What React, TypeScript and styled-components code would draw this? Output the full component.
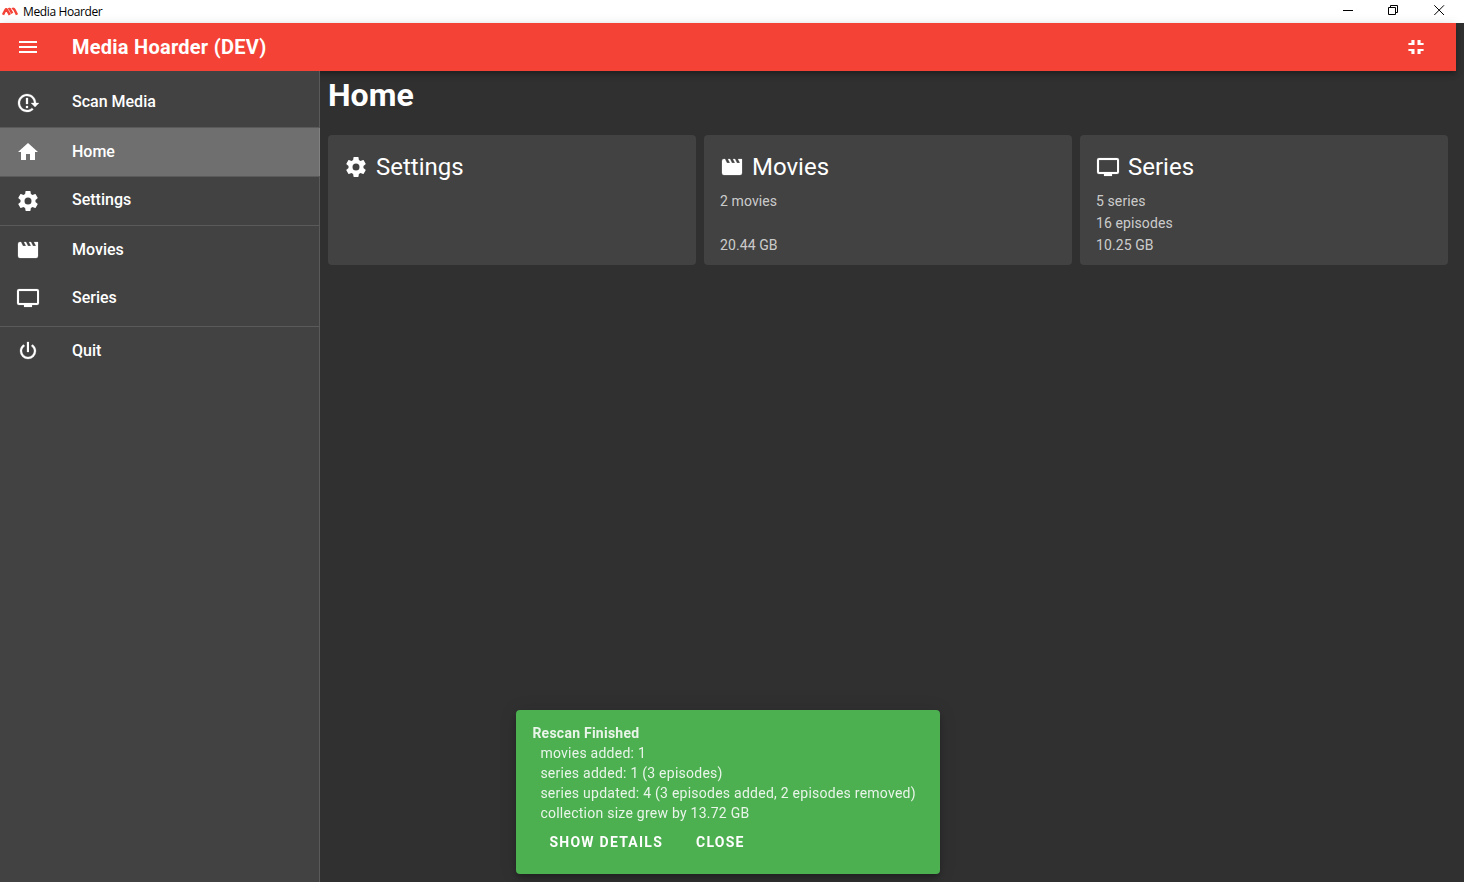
import React from "react";
import styled, { createGlobalStyle } from "styled-components";

const GlobalStyle = createGlobalStyle`
  * { box-sizing: border-box; }
  html, body { margin: 0; height: 100%; overflow: hidden; background: #303030; }
  body { font-family: Roboto, "Liberation Sans", sans-serif; color: #fff; }
`;

const paths = {
  menu: "M3,6H21V8H3V6M3,11H21V13H3V11M3,16H21V18H3V16Z",
  home: "M10,20V14H14V20H19V12H22L12,3L2,12H5V20H10Z",
  cog: "M12,15.5A3.5,3.5 0 0,1 8.5,12A3.5,3.5 0 0,1 12,8.5A3.5,3.5 0 0,1 15.5,12A3.5,3.5 0 0,1 12,15.5M19.43,12.97C19.47,12.65 19.5,12.33 19.5,12C19.5,11.67 19.47,11.34 19.43,11L21.54,9.37C21.73,9.22 21.78,8.95 21.66,8.73L19.66,5.27C19.54,5.05 19.27,4.96 19.05,5.05L16.56,6.05C16.04,5.66 15.5,5.32 14.87,5.07L14.5,2.42C14.46,2.18 14.25,2 14,2H10C9.75,2 9.54,2.18 9.5,2.42L9.13,5.07C8.5,5.32 7.96,5.66 7.44,6.05L4.95,5.05C4.73,4.96 4.46,5.05 4.34,5.27L2.34,8.73C2.21,8.95 2.27,9.22 2.46,9.37L4.57,11C4.53,11.34 4.5,11.67 4.5,12C4.5,12.33 4.53,12.65 4.57,12.97L2.46,14.63C2.27,14.78 2.21,15.05 2.34,15.27L4.34,18.73C4.46,18.95 4.73,19.03 4.95,18.95L7.44,17.94C7.96,18.34 8.5,18.68 9.13,18.93L9.5,21.58C9.54,21.82 9.75,22 10,22H14C14.25,22 14.46,21.82 14.5,21.58L14.87,18.93C15.5,18.67 16.04,18.34 16.56,17.94L19.05,18.95C19.27,19.03 19.54,18.95 19.66,18.73L21.66,15.27C21.78,15.05 21.73,14.78 21.54,14.63L19.43,12.97Z",
  movie: "M18,4L20,8H17L15,4H13L15,8H12L10,4H8L10,8H7L5,4H4A2,2 0 0,0 2,6V18A2,2 0 0,0 4,20H20A2,2 0 0,0 22,18V4H18Z",
  tv: "M21,17H3V5H21M21,3H3A2,2 0 0,0 1,5V17A2,2 0 0,0 3,19H8V21H16V19H21A2,2 0 0,0 23,17V5A2,2 0 0,0 21,3Z",
  power: "M16.56,5.44L15.11,6.89C16.84,7.94 18,9.83 18,12A6,6 0 0,1 12,18A6,6 0 0,1 6,12C6,9.83 7.16,7.94 8.88,6.88L7.44,5.44C5.36,6.88 4,9.28 4,12A8,8 0 0,0 12,20A8,8 0 0,0 20,12C20,9.28 18.64,6.88 16.56,5.44M13,3H11V13H13",
  rescan: "M2 12C2 16.97 6.03 21 11 21C13.39 21 15.68 20.06 17.4 18.4L15.9 16.9C14.63 18.25 12.86 19 11 19C4.76 19 1.64 11.46 6.05 7.05C10.46 2.64 18 5.77 18 12H15L19 16H19.1L23 12H20C20 7.03 15.97 3 11 3C6.03 3 2 7.03 2 12M10 15H12V17H10V15M10 7H12V13H10V7",
  exitFullscreen: "M13.5,14H19.6V16H16.6V19H13.5V14M4.4,14H10.5V19H7.4V16H4.4V14M7.4,5H10.5V10H4.4V8H7.4V5M19.6,8V10H13.5V5H16.6V8H19.6Z",
};
type IconName = keyof typeof paths;

const outline: Partial<Record<IconName, number>> = { power: 0.25, tv: 0.15, movie: 0.2, rescan: 0.25 };

const IconSvg = styled.svg<{ $outline: number }>`
  display: block;
  flex: none;
  width: 24px;
  height: 24px;
  fill: currentColor;
  stroke: ${(p) => (p.$outline ? "currentColor" : "none")};
  stroke-width: ${(p) => p.$outline}px;
`;
const Icon = ({ name }: { name: IconName }) => (
  <IconSvg viewBox="0 0 24 24" $outline={outline[name] ?? 0}><path d={paths[name]} /></IconSvg>
);

const Window = styled.div`
  display: flex;
  flex-direction: column;
  height: 100vh;
`;
const TitleBar = styled.header`
  display: flex;
  align-items: center;
  flex: none;
  height: 23px;
  padding-left: 2px;
  background: #fff;
  color: #000;
  font: 12px/23px "Open Sans", "Noto Sans", sans-serif;
  letter-spacing: -0.38px;
`;
const AppMark = styled.svg`
  width: 16px;
  height: 10px;
  margin-right: 5px;
`;
const WindowTitle = styled.span`
  flex: 1;
`;
const WindowButtons = styled.svg`
  width: 138px;
  height: 23px;
  fill: none;
  stroke: #000;
`;

const AppBar = styled.div`
  position: relative;
  z-index: 1;
  display: flex;
  align-items: center;
  flex: none;
  height: 48px;
  margin-right: 8px;
  padding: 0 28px 0 16px;
  background: #f44336;
  box-shadow: 0 2px 4px -1px rgba(0, 0, 0, 0.2), 0 4px 5px rgba(0, 0, 0, 0.14),
    0 1px 10px rgba(0, 0, 0, 0.12);
`;
const AppTitle = styled.div`
  flex: 1;
  padding-left: 32px;
  font-size: 20px;
  font-weight: 700;
  line-height: 30px;
  letter-spacing: 0.25px;
`;

const Body = styled.div`
  display: flex;
  flex: 1;
  min-height: 0;
`;
const Sidebar = styled.nav`
  position: relative;
  z-index: 2;
  flex: none;
  width: 320px;
  padding-top: 8px;
  background: #424242;
  border-right: 1px solid #5a5a5a;
`;
const NavItem = styled.a<{ $active?: boolean }>`
  display: flex;
  align-items: center;
  gap: 32px;
  height: 48px;
  padding: 0 16px;
  background: ${(p) => (p.$active ? "#6f6f6f" : "transparent")};
  box-shadow: ${(p) => (p.$active ? "1px 0 0 #818181" : "none")};
`;
const NavLabel = styled.span<{ $raised?: boolean }>`
  padding-bottom: ${(p) => (p.$raised ? 2 : 0)}px;
  font-size: 16px;
  font-weight: 500;
  line-height: 20px;
`;
const Divider = styled.hr<{ $top?: number }>`
  height: 1px;
  margin: ${(p) => p.$top ?? 0}px 0 0;
  border: 0;
  background: #5a5a5a;
`;

const Main = styled.main`
  flex: 1;
  padding: 0 16px 0 8px;
`;
const PageTitle = styled.h1`
  margin: 0 0 16px;
  font-size: 32px;
  font-weight: 700;
  line-height: 48px;
`;
const Cards = styled.div`
  display: grid;
  grid-template-columns: repeat(3, 1fr);
  gap: 8px;
`;
const Card = styled.section`
  height: 130px;
  padding: 16px;
  border-radius: 4px;
  background: #424242;
`;
const CardTitle = styled.h2`
  display: flex;
  align-items: center;
  gap: 8px;
  height: 32px;
  margin: 0 0 7px;
  font-size: 24px;
  font-weight: 400;
`;
const CardLine = styled.div`
  height: 22px;
  font-size: 14px;
  line-height: 22px;
  letter-spacing: 0.1px;
  color: rgba(255, 255, 255, 0.74);
`;

const Snackbar = styled.aside`
  position: fixed;
  left: 516px;
  bottom: 8px;
  width: 424px;
  height: 164px;
  padding: 13px 16px 13px 16.4px;
  border-radius: 4px;
  background: #4caf50;
  color: rgba(255, 255, 255, 0.87);
  font-size: 14px;
  line-height: 20px;
  letter-spacing: 0.25px;
  box-shadow: 0 3px 5px -1px rgba(0, 0, 0, 0.2), 0 6px 10px rgba(0, 0, 0, 0.14),
    0 1px 18px rgba(0, 0, 0, 0.12);
`;
const SnackTitle = styled.div`
  font-weight: 700;
`;
const SnackLine = styled.div`
  padding-left: 8px;
`;
const SnackActions = styled.div`
  display: flex;
  gap: 33px;
  padding: 9px 17px;
`;
const SnackButton = styled.button`
  padding: 0;
  border: 0;
  background: none;
  color: #fff;
  font: 700 14px/20px Roboto, sans-serif;
  letter-spacing: 1.25px;
  text-transform: uppercase;
`;

const cards: { icon: IconName; title: string; lines: string[] }[] = [
  { icon: "cog", title: "Settings", lines: [] },
  { icon: "movie", title: "Movies", lines: ["2 movies", "", "20.44 GB"] },
  { icon: "tv", title: "Series", lines: ["5 series", "16 episodes", "10.25 GB"] },
];
const results = [
  "movies added: 1",
  "series added: 1 (3 episodes)",
  "series updated: 4 (3 episodes added, 2 episodes removed)",
  "collection size grew by 13.72 GB",
];

type NavProps = { icon: IconName; label: string; active?: boolean; raised?: boolean };
const Nav = ({ icon, label, active, raised }: NavProps) => (
  <NavItem $active={active}>
    <Icon name={icon} />
    <NavLabel $raised={raised}>{label}</NavLabel>
  </NavItem>
);

export default function App() {
  return (
    <Window>
      <GlobalStyle />
      <TitleBar>
        <AppMark viewBox="0 0 16 10" fill="none" stroke="#f44336" strokeWidth="2.5">
          <path d="M1 7.8 3.4 3Q4.2 1.6 5 3L7.8 7.8M6.4 2.2Q7.6 1.4 8.4 3L10.2 6.4M10.4 2.4Q11.6 1 12.6 3L15 7.8" />
        </AppMark>
        <WindowTitle>Media Hoarder</WindowTitle>
        <WindowButtons viewBox="0 0 138 23">
          <path d="M17 10.5H27M62.5 7.5H69.5V14.5H62.5ZM64.5 7.5V5.5H71.5V12.5H69.5" />
          <path d="M108.3 5.3 118 15M118 5.3 108.3 15" />
        </WindowButtons>
      </TitleBar>
      <AppBar>
        <Icon name="menu" />
        <AppTitle>Media Hoarder (DEV)</AppTitle>
        <Icon name="exitFullscreen" />
      </AppBar>
      <Body>
        <Sidebar>
          <Nav icon="rescan" label="Scan Media" raised />
          <Divider />
          <Nav icon="home" label="Home" active />
          <Divider />
          <Nav icon="cog" label="Settings" raised />
          <Divider />
          <Nav icon="movie" label="Movies" />
          <Nav icon="tv" label="Series" />
          <Divider $top={4} />
          <Nav icon="power" label="Quit" />
        </Sidebar>
        <Main>
          <PageTitle>Home</PageTitle>
          <Cards>
            {cards.map((c) => (
              <Card key={c.title}>
                <CardTitle><Icon name={c.icon} />{c.title}</CardTitle>
                {c.lines.map((l, i) => <CardLine key={i}>{l}</CardLine>)}
              </Card>
            ))}
          </Cards>
        </Main>
      </Body>
      <Snackbar>
        <SnackTitle>Rescan Finished</SnackTitle>
        {results.map((r) => <SnackLine key={r}>{r}</SnackLine>)}
        <SnackActions>
          <SnackButton>Show Details</SnackButton>
          <SnackButton>Close</SnackButton>
        </SnackActions>
      </Snackbar>
    </Window>
  );
}
